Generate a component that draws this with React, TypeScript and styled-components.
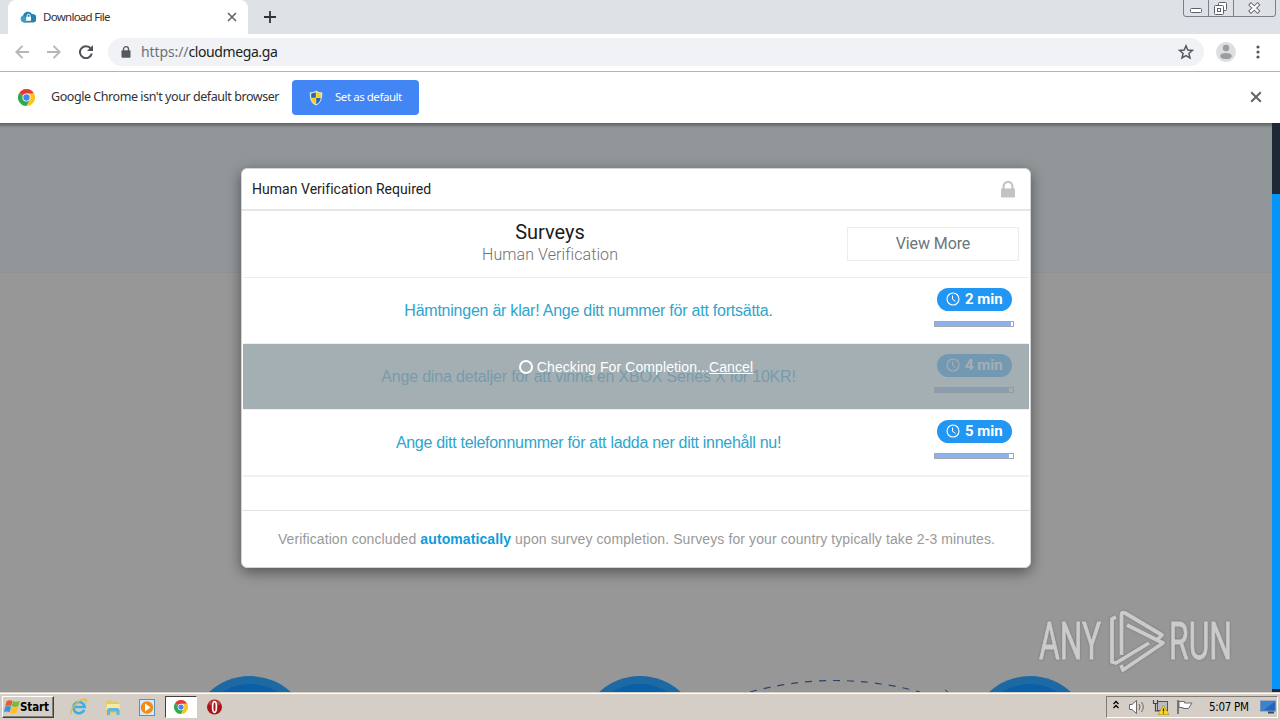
import React from 'react'
import styled, { createGlobalStyle } from 'styled-components'

const surveys = [
  { title: 'Hämtningen är klar! Ange ditt nummer för att fortsätta.', time: 2, progress: 98, spacing: -0.24 },
  { title: 'Ange dina detaljer för att vinna en XBOX Series X för 10KR!', time: 4, progress: 95, spacing: -0.18, checking: true },
  { title: 'Ange ditt telefonnummer för att ladda ner ditt innehåll nu!', time: 5, progress: 95, spacing: -0.3 },
]

const ChromeLogo = ({ size }: { size: number }) => (
  <svg width={size} height={size} viewBox="0 0 48 48">
    <path d="M24 24 L3.2 12 A24 24 0 0 1 44.8 12 Z" fill="#e33b2e" />
    <path d="M24 24 L3.2 12 A24 24 0 0 0 24 48 L34.4 30 Z" fill="#2da94f" />
    <path d="M24 13 L44.8 12 A24 24 0 0 1 24 48 L34.4 30 Z" fill="#fcc31e" />
    <circle cx="24" cy="24" r="11.5" fill="#fff" />
    <circle cx="24" cy="24" r="9" fill="#4285f4" />
  </svg>
)

const CloudIcon = () => (
  <svg width="16" height="12" viewBox="0 0 16 12">
    <path d="M4 11.5 A3.7 3.7 0 0 1 3.2 4.4 A4.8 4.8 0 0 1 12 3 A4.3 4.3 0 0 1 13.2 11.5 Z" fill="#2482ad" />
    <path d="M4 11.5 A3.7 3.7 0 0 1 3 4.4 L7 7 V11.5 Z" fill="#3f9cc4" />
    <rect x="6.2" y="5.8" width="4.8" height="4" fill="#fff" />
    <path d="M7.2 6 V4.6 A1.4 1.4 0 0 1 10 4.6 V6" fill="none" stroke="#fff" />
  </svg>
)

const ShieldIcon = () => (
  <svg width="14" height="16" viewBox="0 0 14 16">
    <path d="M7 .5 C5 2 3 2.4 .8 2.3 C.5 8 1.5 13 7 15.5 C12.5 13 13.5 8 13.2 2.3 C11 2.4 9 2 7 .5Z" fill="#dde5e0" />
    <path d="M6.8 2 C5.3 3 4 3.4 2.2 3.5 V7.7 H6.8Z" fill="#2467b4" />
    <path d="M7.2 2 C8.7 3 10 3.4 11.8 3.5 V7.7 H7.2Z" fill="#fbd116" />
    <path d="M6.8 8 H2.2 C2.7 11 4.2 13 6.8 14.3Z" fill="#fbd116" />
    <path d="M7.2 8 H11.8 C11.3 11 9.8 13 7.2 14.3Z" fill="#2467b4" />
  </svg>
)

const ClockIcon = () => (
  <svg width="14" height="14" viewBox="0 0 14 14" fill="none" stroke="#fff">
    <circle cx="7" cy="7" r="6" strokeWidth="1.1" />
    <path d="M6.5 3.5 V7.3 L9.5 9.3" strokeWidth="1" />
  </svg>
)

const CloseIcon = ({ size = 10 }: { size?: number }) => (
  <svg width={size} height={size} viewBox="0 0 10 10">
    <path d="M1 1 L9 9 M9 1 L1 9" stroke="#5f6368" strokeWidth="1.6" />
  </svg>
)

const Browser = () => (
  <>
    <TabStrip>
      <Tab>
        <CloudIcon />
        <TabTitle>Download File</TabTitle>
        <CloseIcon />
      </Tab>
      <NewTab>
        <svg width="12" height="12" viewBox="0 0 12 12">
          <path d="M6 0 V12 M0 6 H12" stroke="#303238" strokeWidth="1.8" />
        </svg>
      </NewTab>
      <WindowButtons>
        <svg width="93" height="17" viewBox="0 0 93 17" fill="none" stroke="#7a7f8a">
          <path d="M.5 0 V14 Q.5 16.5 3 16.5 H90 Q92.5 16.5 92.5 14 V0 M25.5 0 V16 M50.5 0 V16" />
          <rect x="7.5" y="8.5" width="11" height="4" rx="1" fill="#fff" stroke="#5b606b" />
          <rect x="35.5" y="2.5" width="8" height="8" rx="1" fill="#fff" stroke="#5b606b" />
          <rect x="31.5" y="5.5" width="9" height="9" rx="1" fill="#fff" stroke="#5b606b" />
          <rect x="34.5" y="8.5" width="3" height="3" stroke="#5b606b" />
          <path d="M66.5 3.5 L76 12.5 M76 3.5 L66.5 12.5" stroke="#5b606b" strokeWidth="4" />
          <path d="M67.2 4.2 L75.3 11.8 M75.3 4.2 L67.2 11.8" stroke="#fff" strokeWidth="2.3" />
        </svg>
      </WindowButtons>
    </TabStrip>
    <Toolbar>
      <NavIcons>
        <svg width="14" height="14" viewBox="0 0 14 14" fill="none" stroke="#b4b6b8" strokeWidth="1.9">
          <path d="M14 7 H1.5 M7.5 .8 L1.3 7 L7.5 13.2" />
        </svg>
        <svg width="14" height="14" viewBox="0 0 14 14" fill="none" stroke="#b4b6b8" strokeWidth="1.9">
          <path d="M0 7 H12.5 M6.5 .8 L12.7 7 L6.5 13.2" />
        </svg>
        <svg width="14" height="14" viewBox="0 0 14 14">
          <path d="M11.8 3.6 A6 6 0 1 0 12.8 8.6" fill="none" stroke="#505458" strokeWidth="2" />
          <path d="M14 0 V6 H8Z" fill="#505458" />
        </svg>
      </NavIcons>
      <AddressBar>
        <svg width="10" height="12" viewBox="0 0 10 12">
          <rect x=".5" y="4.3" width="9" height="7.5" rx="1" fill="#55595e" />
          <path d="M2.5 5 V3 A2.5 2.3 0 0 1 7.5 3 V5" fill="none" stroke="#55595e" strokeWidth="1.3" />
        </svg>
        <Url><span>https://</span>cloudmega.ga</Url>
        <svg width="16" height="16" viewBox="0 0 16 16">
          <path d="M8 1.8 L9.8 6 L14.4 6.4 L10.9 9.4 L12 13.9 L8 11.5 L4 13.9 L5.1 9.4 L1.6 6.4 L6.2 6Z" fill="none" stroke="#55595e" strokeWidth="1.5" />
        </svg>
      </AddressBar>
      <Profile>
        <svg width="20" height="20" viewBox="0 0 20 20">
          <circle cx="10" cy="10" r="10" fill="#dddedf" />
          <circle cx="10" cy="6" r="3.2" fill="#9b9da0" />
          <ellipse cx="10" cy="14" rx="5.8" ry="3.1" fill="#9b9da0" />
        </svg>
        <svg width="4" height="14" viewBox="0 0 4 14" fill="#55595e">
          <circle cx="2" cy="2" r="1.6" /><circle cx="2" cy="7" r="1.6" /><circle cx="2" cy="12" r="1.6" />
        </svg>
      </Profile>
    </Toolbar>
    <InfoBar>
      <ChromeLogo size={17} />
      <InfoText>Google Chrome isn't your default browser</InfoText>
      <DefaultButton><ShieldIcon /><span>Set as default</span></DefaultButton>
      <CloseIcon size={12} />
    </InfoBar>
  </>
)

const SurveyModal = () => (
  <Modal>
    <ModalHeader>
      <span>Human Verification Required</span>
      <svg width="14" height="17" viewBox="0 0 14 17">
        <rect x="0" y="7.5" width="14" height="9" rx=".8" fill="#c3c3c3" />
        <path d="M2.6 8 V5.4 A4.4 4.4 0 0 1 11.4 5.4 V8" fill="none" stroke="#c3c3c3" strokeWidth="2.2" />
      </svg>
    </ModalHeader>
    <ModalBody>
      <Intro>
        <IntroText>
          <h2>Surveys</h2>
          <p>Human Verification</p>
        </IntroText>
        <MoreButton>View More</MoreButton>
      </Intro>
      {surveys.map((item) => (
        <Survey key={item.time}>
          <SurveyTitle $spacing={item.spacing}>{item.title}</SurveyTitle>
          <SurveyInfo>
            <Badge><ClockIcon /><span>{item.time} min</span></Badge>
            <Progress><div style={{ width: `${item.progress}%` }} /></Progress>
          </SurveyInfo>
          {item.checking && (
            <Checking>
              <Ring />
              <span>Checking For Completion...</span><a>Cancel</a>
            </Checking>
          )}
        </Survey>
      ))}
    </ModalBody>
    <ModalFooter>
      Verification concluded <b>automatically</b> upon survey completion. Surveys for your country typically take 2-3 minutes.
    </ModalFooter>
  </Modal>
)

const StepsArt = () => (
  <svg width="1272" height="16" viewBox="0 676 1272 16">
    {[250, 640, 1030].map((x) => (
      <g key={x}>
        <circle cx={x} cy="736" r="60" fill="#1c69a3" />
        <circle cx={x} cy="736" r="52" fill="#0960a6" />
      </g>
    ))}
    <path d="M750 692 Q835 669 920 692" fill="none" stroke="#29456f" strokeWidth="1.2" strokeDasharray="7 7" />
    <path d="M945 690 L948 692" stroke="#29456f" />
  </svg>
)

const Watermark = () => (
  <WatermarkBox>
    <svg width="215" height="70" viewBox="0 0 215 70">
      <g fill="#cbcbcb" stroke="#cbcbcb" strokeWidth=".9" fontFamily="Roboto, sans-serif" fontSize="52">
        <text x="4" y="54" textLength="62" lengthAdjust="spacingAndGlyphs">ANY</text>
        <text x="134" y="54" textLength="63" lengthAdjust="spacingAndGlyphs">RUN</text>
      </g>
      <g fill="none" stroke="#cbcbcb" strokeWidth="3.8" strokeLinejoin="round">
        <path d="M86.5 50 V10 Q86.5 6.500 90 8 L127 30 L122 35" />
        <path d="M81 12 L77 14 V57 L81 58 L114 38" />
        <path d="M86 60 L88 65 L128 38 L92 20" />
      </g>
    </svg>
  </WatermarkBox>
)

const TaskbarBar = () => (
  <Taskbar>
    <StartButton>
      <svg width="16" height="16" viewBox="0 0 16 16">
        <path d="M2.500 2.500 Q5 .2 8.500 1.800 L7.200 7 Q4 5.800 1.200 7.500Z" fill="#ee5a27" />
        <path d="M9 2 Q12 3.500 15.800 1.800 L14.200 7.300 Q11 8.500 7.700 7.200Z" fill="#7cb83b" />
        <path d="M1 8 Q4 6.300 7.100 7.700 L5.600 13.300 Q3 11.800 0 13.300Z" fill="#3d93d9" />
        <path d="M7.600 7.900 Q11 9.200 14 8 L12.500 13.800 Q9 15.300 6.200 13.700Z" fill="#fcbf22" />
      </svg>
      <span>Start</span>
    </StartButton>
    <Launcher>
      <LaunchItem>
        <svg width="18" height="18" viewBox="0 0 18 18" fill="none">
          <path d="M14.200 11.800 A5.600 5.600 0 1 1 14.600 9 H5" stroke="#3eaee3" strokeWidth="2.6" />
          <path d="M1.5 16 C-1 12 7 3 13 1.5 C17 .5 17 3 15.5 5" stroke="#e5bd3b" strokeWidth="1.3" />
        </svg>
      </LaunchItem>
      <LaunchItem>
        <svg width="16" height="17" viewBox="0 0 16 17">
          <path d="M1 3 Q1 1.5 3 1.5 H6 L7.5 3 H13 Q14 3 14 5 V14 H1Z" fill="#e6c865" />
          <path d="M2 5 H14.5 V11 H1Z" fill="#fae9a3" />
          <path d="M2 16 V11.5 Q2 9 4.5 9 H12 Q14.5 9 14.5 11.5 V16 H11.5 V12.5 H5 V16Z" fill="#61b6df" />
        </svg>
      </LaunchItem>
      <LaunchItem>
        <svg width="16" height="17" viewBox="0 0 16 17">
          <rect x=".5" y=".5" width="15" height="16" fill="#d7eaf8" stroke="#5394bf" />
          <circle cx="8" cy="8.5" r="6.2" fill="#f18b19" />
          <path d="M6 4.5 L11.5 8.5 L6 12.5Z" fill="#fff" />
        </svg>
      </LaunchItem>
      <LaunchItem $active><ChromeLogo size={14} /></LaunchItem>
      <LaunchItem>
        <svg width="16" height="16" viewBox="0 0 16 16">
          <circle cx="7.500" cy="8" r="7.5" fill="#a51519" />
          <path d="M1 5 A7.500 7.500 0 0 1 14 5 Q8 8 1 5Z" fill="#c93a3c" />
          <ellipse cx="7.500" cy="8" rx="1.9" ry="5.3" fill="#a51519" stroke="#fff" strokeWidth="1.7" />
        </svg>
      </LaunchItem>
    </Launcher>
    <Tray>
      <svg width="81" height="18" viewBox="0 0 81 18">
        <path d="M.5 6 L3 3.5 L5.5 6 M.5 10 L3 7.5 L5.5 10" fill="none" stroke="#000" strokeWidth="1.3" />
        <g fill="#fff" stroke="#686868">
          <path d="M16.500 6.5 H19 L23.5 2.5 V15.5 L19 11.5 H16.500Z" />
          <path d="M26 6 Q28 9 26 12 M28.5 4 Q32 9 28.5 14" fill="none" />
        </g>
        <rect x="44.5" y="3.5" width="10" height="9" fill="#b8bcc1" stroke="#555" />
        <path d="M40.5 2 V5.5 H44.5 V2 M42.5 6 V13 H46" fill="none" stroke="#444" strokeWidth="1.2" />
        <path d="M50.500 7.5 L56 16.5 H45Z" fill="#ffd91e" stroke="#9c7a00" strokeWidth=".5" />
        <path d="M50.500 10.5 V13.5 M50.500 14.5 V15.5" stroke="#222" strokeWidth="1.3" />
        <path d="M65 2 V16" stroke="#555" strokeWidth="1.4" />
        <path d="M66 3.5 H71.5 V5 H79 L75.500 10.5 H70 V9.5 H66Z" fill="#fff" stroke="#6b6b6b" />
      </svg>
      <span>5:07 PM</span>
      <svg width="16" height="14" viewBox="0 0 16 14">
        <rect x=".5" y="1" width="15" height="10" fill="#2466bb" stroke="#6e92ba" />
        <path d="M1 1.5 H15 L4 10 H1Z" fill="#3c82d1" />
        <path d="M8 12.5 H14" stroke="#38485e" strokeWidth="2" />
      </svg>
    </Tray>
  </Taskbar>
)

const App = () => {
  return (
    <Screen>
      <GlobalStyle />
      <Browser />
      <Page>
        <Content>
          <SurveyModal />
          <StepsArt />
        </Content>
        <ScrollBar><div /></ScrollBar>
        <Watermark />
      </Page>
      <TaskbarBar />
    </Screen>
  )
}

const GlobalStyle = createGlobalStyle`
  * {
    box-sizing: border-box;
  }
  body {
    margin: 0;
    overflow: hidden;
  }
  svg {
    display: block;
    flex-shrink: 0;
  }
  h2, p {
    margin: 0;
    font-weight: 400;
  }
`

const Screen = styled.div`
  width: 1280px;
  height: 720px;
  display: flex;
  flex-direction: column;
  overflow: hidden;
  font-family: 'DejaVu Sans Condensed', 'DejaVu Sans', sans-serif;
  white-space: nowrap;
`

const TabStrip = styled.div`
  display: flex;
  height: 34px;
  padding-left: 8px;
  background: #dee1e6;
`

const Tab = styled.div`
  display: flex;
  align-items: center;
  width: 240px;
  padding: 0 11px 0 12px;
  border-radius: 8px 8px 0 0;
  background: #fff;
`

const TabTitle = styled.span`
  flex: 1;
  margin-left: 7px;
  padding-bottom: 2px;
  font: 11.5px 'Noto Sans', sans-serif;
  letter-spacing: -0.72px;
  color: #303236;
`

const NewTab = styled.div`
  flex: 1;
  display: flex;
  align-items: center;
  padding-left: 16px;
`

const WindowButtons = styled.div`
  padding-right: 4px;
`

const Toolbar = styled.div`
  display: flex;
  align-items: center;
  height: 38px;
  padding-left: 15px;
  padding-bottom: 1px;
  background: #fff;
  border-bottom: 1px solid #b3b4b6;
`

const NavIcons = styled.div`
  display: flex;
  gap: 18px;
  width: 93px;
`

const AddressBar = styled.div`
  display: flex;
  align-items: center;
  width: 1096px;
  height: 28px;
  padding: 0 10px 0 13px;
  border-radius: 14px;
  background: #f0f2f5;
`

const Url = styled.div`
  flex: 1;
  margin-left: 10px;
  padding-bottom: 2px;
  font: 14px 'Noto Sans', sans-serif;
  letter-spacing: -0.4px;
  color: #202124;
  span {
    letter-spacing: -0.1px;
    color: #6d7176;
  }
`

const Profile = styled.div`
  display: flex;
  align-items: center;
  gap: 20px;
  margin-left: 12px;
`

const InfoBar = styled.div`
  display: flex;
  align-items: center;
  height: 51px;
  padding: 0 18px 1px;
  background: #fff;
  > svg:last-child {
    margin-left: auto;
  }
`

const InfoText = styled.span`
  width: 241px;
  margin-left: 16px;
  padding-bottom: 1px;
  font: 12.5px 'Noto Sans', sans-serif;
  letter-spacing: -0.44px;
  color: #303236;
`

const DefaultButton = styled.div`
  display: flex;
  align-items: center;
  gap: 12px;
  width: 127px;
  height: 35px;
  margin-top: 1px;
  padding-left: 17px;
  border-radius: 4px;
  background: #4285f4;
  color: #fff;
  font: 11.5px 'Noto Sans', sans-serif;
  letter-spacing: -0.45px;
  span {
    padding-bottom: 2px;
  }
`

const Page = styled.div`
  position: relative;
  display: flex;
  height: 569px;
`

const Content = styled.div`
  display: flex;
  flex-direction: column;
  justify-content: space-between;
  width: 1272px;
  padding-top: 45px;
  background:
    linear-gradient(rgba(0, 0, 0, 0.35), transparent) 0 0 / 100% 5px no-repeat,
    linear-gradient(#919699 149px, #8d9194 149px, #8d9194 150px, #979797 150px);
`

const ScrollBar = styled.div`
  width: 8px;
  padding: 71px 0 3px;
  background: #1f2836;
  div {
    height: 100%;
    background: #0595fa;
  }
`

const Modal = styled.div`
  width: 790px;
  height: 400px;
  margin-left: 241px;
  border: 1px solid #d2d4d5;
  border-radius: 6px;
  background: #fff;
  box-shadow: 0 4px 14px rgba(0, 0, 0, 0.45);
  font-family: 'Liberation Sans', sans-serif;
`

const ModalHeader = styled.div`
  display: flex;
  align-items: center;
  justify-content: space-between;
  height: 42px;
  padding: 0 15px 0 10px;
  border-bottom: 2px solid #e5e5e5;
  font: 14px Roboto, sans-serif;
  letter-spacing: 0.03px;
  color: #222;
`

const ModalBody = styled.div`
  margin: 0 1px;
  border-bottom: 2px solid #f0f0f0;
`

const Intro = styled.div`
  display: flex;
  align-items: center;
  height: 67px;
  padding: 0 10px;
  border-bottom: 1px solid #ebebeb;
`

const IntroText = styled.div`
  flex: 1;
  padding-bottom: 2px;
  text-align: center;
  font-family: Roboto, sans-serif;
  h2 {
    font-size: 20px;
    line-height: 23px;
    color: #1c1c1c;
  }
  p {
    font-size: 16px;
    line-height: 21px;
    font-weight: 300;
    letter-spacing: 0.08px;
    color: #707070;
  }
`

const MoreButton = styled.div`
  width: 172px;
  height: 34px;
  border: 1px solid #ececec;
  text-align: center;
  font: 16px/32px Roboto, sans-serif;
  letter-spacing: -0.1px;
  color: #6c757d;
`

const Survey = styled.div`
  position: relative;
  display: flex;
  align-items: center;
  height: 66px;
  padding-right: 15px;
  border-bottom: 1px solid #efefef;
  &:last-child {
    border-bottom: 0;
    height: 65px;
  }
`

const SurveyTitle = styled.div<{ $spacing: number }>`
  flex: 1;
  text-align: center;
  font-size: 16px;
  letter-spacing: ${(props) => props.$spacing}px;
  color: #2ea5cc;
`

const SurveyInfo = styled.div`
  width: 80px;
  height: 100%;
  padding-top: 10px;
`

const Badge = styled.div`
  display: flex;
  align-items: center;
  gap: 5px;
  width: 75px;
  height: 23px;
  margin-left: 3px;
  padding: 0 0 2px 9px;
  border-radius: 12px;
  background: #2196f3;
  color: #fff;
  font: 700 15px Roboto, sans-serif;
`

const Progress = styled.div`
  height: 6px;
  margin-top: 10px;
  border: 1px solid #a2a9b5;
  background: #fff;
  div {
    height: 100%;
    background: #8eb0eb;
  }
`

const Checking = styled.div`
  position: absolute;
  inset: 0;
  display: flex;
  justify-content: center;
  padding-top: 15px;
  background: rgba(138, 153, 159, 0.78);
  color: #fff;
  font-size: 14px;
  line-height: 17px;
  letter-spacing: 0.1px;
  a {
    text-decoration: underline;
  }
`

const Ring = styled.div`
  width: 14px;
  height: 14px;
  margin: 1px 4px 0 0;
  border: 2px solid #fff;
  border-radius: 50%;
`

const ModalFooter = styled.div`
  margin-top: 33px;
  padding: 20px 0 0 1px;
  border-top: 1px solid #e3e3e3;
  text-align: center;
  font-size: 14px;
  line-height: 17px;
  letter-spacing: 0.1px;
  color: #999;
  b {
    color: #109bdd;
  }
`

const WatermarkBox = styled.div`
  position: absolute;
  left: 1035px;
  top: 482px;
  filter: drop-shadow(0 0 1px rgba(90, 90, 90, 0.6));
`

const Taskbar = styled.div`
  display: flex;
  align-items: center;
  height: 28px;
  padding: 1px 2px 0;
  border-top: 1px solid #d4d0c8;
  box-shadow: inset 0 1px #fff;
  background: #d5cec6;
`

const StartButton = styled.div`
  display: flex;
  align-items: center;
  width: 52px;
  height: 22px;
  padding-left: 1px;
  border: 1px solid;
  border-color: #fff #404040 #404040 #fff;
  box-shadow: inset -1px -1px #848078;
  font-weight: 700;
  font-size: 11.5px;
  letter-spacing: -0.1px;
  span {
    padding-bottom: 1px;
  }
`

const Launcher = styled.div`
  flex: 1;
  display: flex;
  align-items: center;
  gap: 2px;
  padding-left: 9px;
`

const LaunchItem = styled.div<{ $active?: boolean }>`
  display: flex;
  align-items: center;
  justify-content: center;
  width: 32px;
  height: 22px;
  background: ${(props) => (props.$active ? '#fff' : 'transparent')};
  border: ${(props) => (props.$active ? '1px solid #404040' : '0')};
  border-right-color: #fff;
  border-bottom-color: #fff;
`

const Tray = styled.div`
  display: flex;
  align-items: center;
  width: 172px;
  height: 22px;
  padding-left: 6px;
  border: 1px solid;
  border-color: #817d76 #fff #fff #817d76;
  font-size: 11.5px;
  letter-spacing: -0.3px;
  span {
    width: 51px;
    margin-left: 15px;
  }
`

export default App
